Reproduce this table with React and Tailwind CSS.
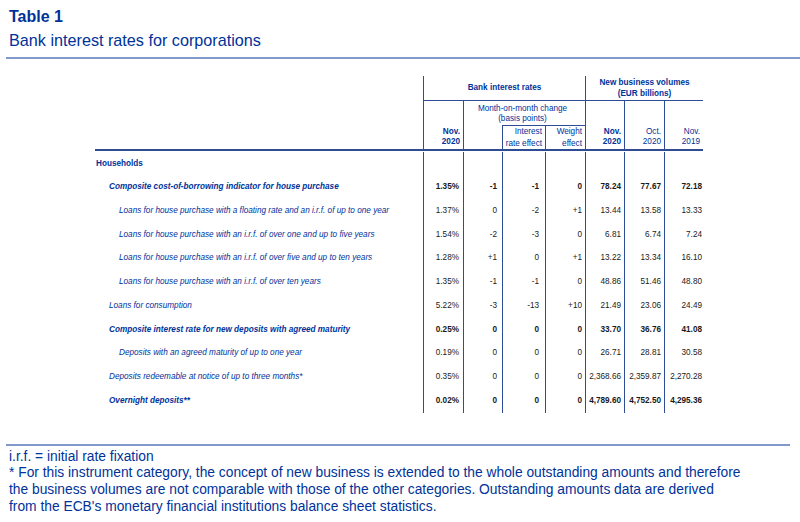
const rows = [
  { label: 'Households', level: 0, bold: true, upright: true, values: null },
  { label: 'Composite cost-of-borrowing indicator for house purchase', level: 1, bold: true, values: ['1.35%', '-1', '-1', '0', '78.24', '77.67', '72.18'] },
  { label: 'Loans for house purchase with a floating rate and an i.r.f. of up to one year', level: 2, values: ['1.37%', '0', '-2', '+1', '13.44', '13.58', '13.33'] },
  { label: 'Loans for house purchase with an i.r.f. of over one and up to five years', level: 2, values: ['1.54%', '-2', '-3', '0', '6.81', '6.74', '7.24'] },
  { label: 'Loans for house purchase with an i.r.f. of over five and up to ten years', level: 2, values: ['1.28%', '+1', '0', '+1', '13.22', '13.34', '16.10'] },
  { label: 'Loans for house purchase with an i.r.f. of over ten years', level: 2, values: ['1.35%', '-1', '-1', '0', '48.86', '51.46', '48.80'] },
  { label: 'Loans for consumption', level: 1, values: ['5.22%', '-3', '-13', '+10', '21.49', '23.06', '24.49'] },
  { label: 'Composite interest rate for new deposits with agreed maturity', level: 1, bold: true, values: ['0.25%', '0', '0', '0', '33.70', '36.76', '41.08'] },
  { label: 'Deposits with an agreed maturity of up to one year', level: 2, values: ['0.19%', '0', '0', '0', '26.71', '28.81', '30.58'] },
  { label: 'Deposits redeemable at notice of up to three months*', level: 1, values: ['0.35%', '0', '0', '0', '2,368.66', '2,359.87', '2,270.28'] },
  { label: 'Overnight deposits**', level: 1, bold: true, values: ['0.02%', '0', '0', '0', '4,789.60', '4,752.50', '4,295.36'] },
]

const indent = ['pl-[1px]', 'pl-[14px]', 'pl-[24px]']
const colPad = ['pr-[4px]', 'pr-[5px]', 'pr-[6px]', 'pr-[3px]', 'pr-[3px]', 'pr-[3px]', 'pr-[1px]']
const cols = 'grid grid-cols-[328px_40px_39px_43px_40px_39px_40px_39px]'
const line = 'border-[#2e4d94]'

export default function App() {
  return (
    <div className="w-[800px] h-[522px] bg-white overflow-hidden text-[#003299] font-['Liberation_Sans',Arial,sans-serif]">
      {/* title */}
      <div className="pl-[9px] pt-[8px]">
        <h1 className="text-[16px] leading-[18px] font-bold">Table 1</h1>
        <p className="mt-[5px] text-[16.2px] leading-[18px]">Bank interest rates for corporations</p>
      </div>
      <div className="ml-[6px] mt-[8px] border-t-2 border-[#8199cb]" />

      {/* table */}
      <div className="ml-[95px] mt-[17px] w-[608px] text-[8.2px]">
        <div className={`${cols} grid-rows-[25px_24px_24px] border-b-2 ${line}`}>
          <div className="col-start-1 row-start-1 row-span-3" />
          <div className={`col-start-2 col-span-4 row-start-1 flex items-center justify-center font-bold border-l border-b ${line}`}>
            Bank interest rates
          </div>
          <div className={`col-start-6 col-span-3 row-start-1 flex flex-col items-center justify-center leading-[11px] font-bold border-l border-b ${line}`}>
            <span>New business volumes</span>
            <span>(EUR billions)</span>
          </div>

          <HeadCell col="col-start-2" bold top="Nov." bottom="2020" />
          <div className={`col-start-3 col-span-3 row-start-2 flex flex-col items-center justify-center pt-[1px] leading-[10px] border-l ${line}`}>
            <span className="pr-[4px]">Month-on-month change</span>
            <span className="pr-[4px]">(basis points)</span>
          </div>
          <div className={`col-start-3 row-start-3 border-l ${line}`} />
          <div className={`col-start-4 row-start-3 flex flex-col items-end justify-center leading-[12px] pr-[3px] border-l border-t ${line}`}>
            <span>Interest</span>
            <span>rate effect</span>
          </div>
          <div className={`col-start-5 row-start-3 flex flex-col items-end justify-center leading-[12px] pr-[3px] border-l border-t ${line}`}>
            <span>Weight</span>
            <span>effect</span>
          </div>
          <HeadCell col="col-start-6" bold top="Nov." bottom="2020" />
          <HeadCell col="col-start-7" top="Oct." bottom="2020" />
          <HeadCell col="col-start-8" top="Nov." bottom="2019" />
        </div>

        <div className={`${cols} auto-rows-[23.7px] pt-[1px]`}>
          {rows.map((r, i) => (
            <Row key={i} row={r} />
          ))}
        </div>
      </div>

      {/* notes */}
      <div className="ml-[6px] mt-[31px] w-[784px] border-t-2 border-[#8199cb]" />
      <div className="pl-[9px] pt-[3px] text-[13.8px] leading-[16.7px]">
        <p>i.r.f. = initial rate fixation</p>
        <p>* For this instrument category, the concept of new business is extended to the whole outstanding amounts and therefore</p>
        <p>the business volumes are not comparable with those of the other categories. Outstanding amounts data are derived</p>
        <p>from the ECB's monetary financial institutions balance sheet statistics.</p>
      </div>
    </div>
  )
}

function HeadCell({ col, top, bottom, bold }) {
  return (
    <div className={`${col} row-start-2 row-span-2 flex flex-col items-end justify-end pb-[2px] pr-[3px] leading-[10px] border-l ${line} ${bold ? 'font-bold' : ''}`}>
      <span>{top}</span>
      <span>{bottom}</span>
    </div>
  )
}

function Row({ row }) {
  const { label, level, bold, upright, values } = row
  return (
    <>
      <div className={`flex items-center whitespace-nowrap ${indent[level]} ${bold ? 'font-bold' : ''} ${upright ? '' : 'italic'}`}>
        {label}
      </div>
      {colPad.map((pad, j) => (
        <div
          key={j}
          className={`flex items-center justify-end whitespace-nowrap text-[#1a1a1a] border-l ${line} ${pad} ${bold ? 'font-bold' : ''}`}
        >
          {values ? values[j] : ''}
        </div>
      ))}
    </>
  )
}
